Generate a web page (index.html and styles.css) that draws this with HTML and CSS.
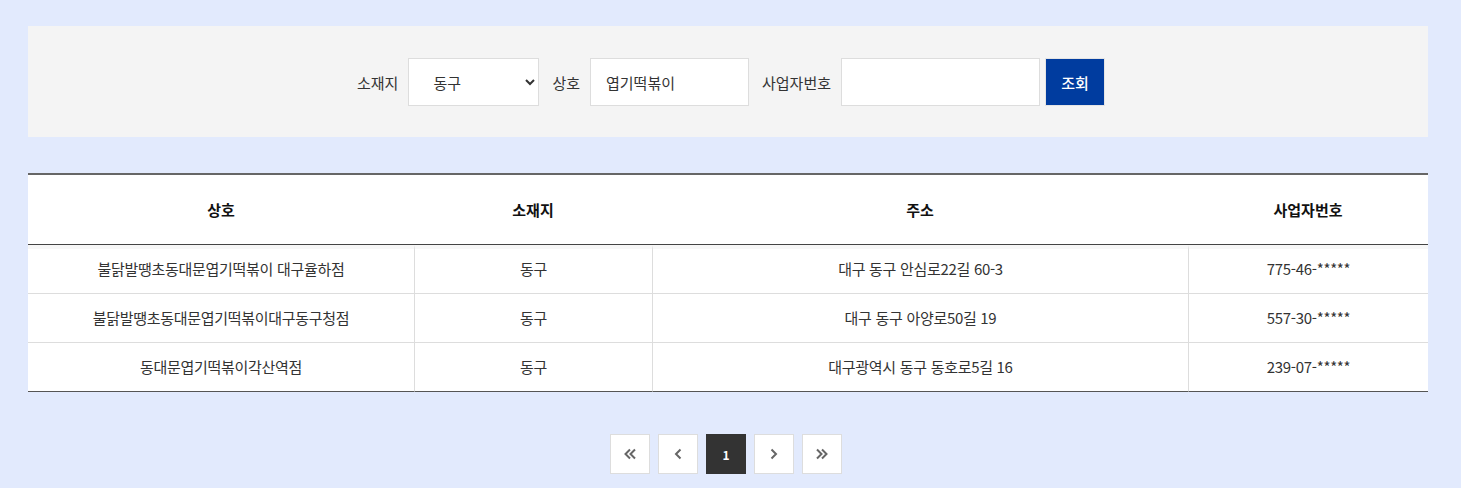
FILE: index.html
```html
<!DOCTYPE html>
<html lang="ko">
<head>
	<meta charset="utf-8">
	<title>업소 조회</title>
	<link rel="stylesheet" href="styles.css">
</head>
<body>
	<div class="wrap">
		<form class="searchBox" onsubmit="return false;">
			<label class="lbl" for="area">소재지</label>
			<select id="area" class="iptSelect">
				<option>동구</option>
				<option>중구</option>
				<option>서구</option>
				<option>남구</option>
				<option>북구</option>
			</select>
			<label class="lbl" for="shopName">상호</label>
			<input type="text" id="shopName" class="iptText name" value="엽기떡볶이">
			<label class="lbl" for="bizNo">사업자번호</label>
			<input type="text" id="bizNo" class="iptText biz" value="">
			<button type="submit" class="btnSearch">조회</button>
		</form>

		<table class="listTable">
			<colgroup>
				<col style="width:386px">
				<col style="width:238px">
				<col style="width:536px">
				<col>
			</colgroup>
			<thead>
				<tr>
					<th>상호</th>
					<th>소재지</th>
					<th>주소</th>
					<th>사업자번호</th>
				</tr>
			</thead>
			<tbody>
				<tr>
					<td>불닭발땡초동대문엽기떡볶이 대구율하점</td>
					<td>동구</td>
					<td>대구 동구 안심로22길 60-3</td>
					<td>775-46-*****</td>
				</tr>
				<tr>
					<td>불닭발땡초동대문엽기떡볶이대구동구청점</td>
					<td>동구</td>
					<td>대구 동구 아양로50길 19</td>
					<td>557-30-*****</td>
				</tr>
				<tr>
					<td>동대문엽기떡볶이각산역점</td>
					<td>동구</td>
					<td>대구광역시 동구 동호로5길 16</td>
					<td>239-07-*****</td>
				</tr>
			</tbody>
		</table>

		<div class="paging">
			<a href="#" class="pg first" title="처음"><svg width="14" height="12" viewBox="0 0 14 12"><path d="M7 1.5 2.5 6 7 10.5M12 1.5 7.5 6 12 10.5" fill="none" stroke="#666" stroke-width="2"/></svg></a>
			<a href="#" class="pg prev" title="이전"><svg width="8" height="12" viewBox="0 0 8 12"><path d="M6.5 1.5 2 6l4.5 4.5" fill="none" stroke="#666" stroke-width="2"/></svg></a>
			<strong class="pg on">1</strong>
			<a href="#" class="pg next" title="다음"><svg width="8" height="12" viewBox="0 0 8 12"><path d="M1.5 1.5 6 6l-4.5 4.5" fill="none" stroke="#666" stroke-width="2"/></svg></a>
			<a href="#" class="pg last" title="마지막"><svg width="14" height="12" viewBox="0 0 14 12"><path d="M2 1.5 6.5 6 2 10.5M7 1.5 11.5 6 7 10.5" fill="none" stroke="#666" stroke-width="2"/></svg></a>
		</div>
	</div>
</body>
</html>
```

FILE: styles.css
```css
* {margin:0; padding:0; box-sizing:border-box;}
body {background:#e2eafd; font-family:"Noto Sans CJK KR", "Noto Sans", sans-serif; color:#333; font-size:15px;}
.wrap {margin-left:28px; padding-top:26px; width:1400px;}

.searchBox {display:flex; justify-content:center; align-items:center; padding:32px 0 31px 6px; background:#f4f4f4;}
.searchBox .lbl {margin-right:10px; font-size:15px; color:#333;}
.searchBox .iptSelect {margin-right:13px; padding:0 12px 0 20px; width:131px; height:48px; font-family:inherit; font-size:15px; color:#333; border:1px solid #ddd; background:#fff; border-radius:0;}
.searchBox .iptText {margin-right:13px; padding:0 15px; height:48px; font-family:inherit; font-size:15px; color:#333; border:1px solid #ddd; background:#fff; outline:none;}
.searchBox .iptText.name {width:159px;}
.searchBox .iptText.biz {margin-right:5px; width:199px;}
.searchBox .btnSearch {flex:none; width:60px; height:48px; font-family:inherit; font-size:15px; font-weight:500; color:#fff; background:#003c9f; border:1px solid #e4e4e4; cursor:pointer;}

.listTable {margin-top:36px; width:100%; table-layout:fixed; border-collapse:separate; border-spacing:0; border-top:2px solid #666; background:#fff;}
.listTable th {height:70px; font-size:15px; font-weight:bold; color:#111; border-bottom:1px solid #444;}
.listTable td {padding:12px 10px; line-height:24px; text-align:center; font-size:15px; color:#333; letter-spacing:-0.3px; border-bottom:1px solid #ddd; border-left:1px solid #ddd;}
.listTable td:first-child {border-left:0;}
.listTable tbody tr:first-child td {padding-top:8px; border-top:4px solid #f7f7f7;}
.listTable tbody tr:last-child td {border-bottom-color:#555;}

.paging {display:flex; justify-content:center; gap:8px; margin-top:42px; padding-right:4px;}
.paging .pg {display:flex; justify-content:center; align-items:center; width:40px; height:40px; border:1px solid #ddd; background:#fff; text-decoration:none;}
.paging .pg.on {font-size:12px; font-weight:bold; color:#fff; background:#333; border-color:#333;}
```
